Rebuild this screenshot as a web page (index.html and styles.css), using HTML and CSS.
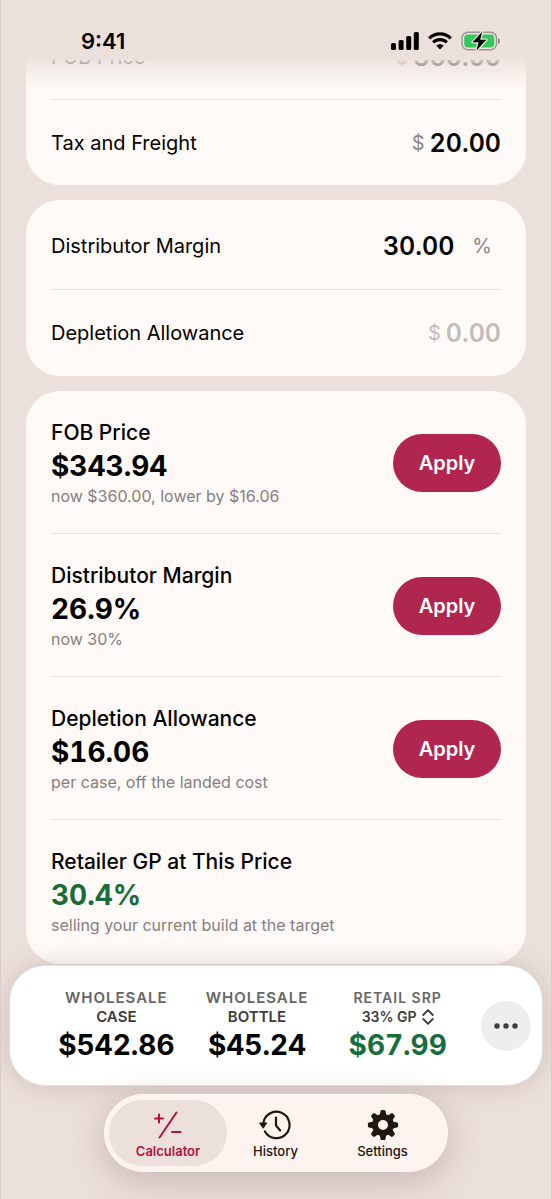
FILE: index.html
```html
<!DOCTYPE html>
<html lang="en">
<head>
<meta charset="utf-8">
<meta name="viewport" content="width=device-width, initial-scale=1">
<title>Calculator</title>
<link rel="stylesheet" href="styles.css">
</head>
<body>
<div class="screen">
  <main class="content">
    <section class="card card-first">
      <div class="field">
        <label class="field-label" for="fob">FOB Price</label>
        <span class="unit">$</span>
        <input class="amount" id="fob" type="text" inputmode="decimal" value="360.00">
      </div>
      <div class="field">
        <label class="field-label" for="tax">Tax and Freight</label>
        <span class="unit">$</span>
        <input class="amount" id="tax" type="text" inputmode="decimal" value="20.00">
      </div>
    </section>

    <section class="card">
      <div class="field">
        <label class="field-label" for="margin">Distributor Margin</label>
        <input class="amount" id="margin" type="text" inputmode="decimal" value="30.00">
        <span class="unit unit-after">%</span>
      </div>
      <div class="field">
        <label class="field-label" for="depletion">Depletion Allowance</label>
        <span class="unit unit-empty">$</span>
        <input class="amount" id="depletion" type="text" inputmode="decimal" placeholder="0.00">
      </div>
    </section>

    <section class="card card-results">
      <div class="result">
        <div class="result-text">
          <h2 class="result-title">FOB Price</h2>
          <p class="result-value">$343.94</p>
          <p class="result-note">now $360.00, lower by $16.06</p>
        </div>
        <button class="apply" type="button">Apply</button>
      </div>
      <div class="result">
        <div class="result-text">
          <h2 class="result-title">Distributor Margin</h2>
          <p class="result-value">26.9%</p>
          <p class="result-note">now 30%</p>
        </div>
        <button class="apply" type="button">Apply</button>
      </div>
      <div class="result">
        <div class="result-text">
          <h2 class="result-title">Depletion Allowance</h2>
          <p class="result-value">$16.06</p>
          <p class="result-note">per case, off the landed cost</p>
        </div>
        <button class="apply" type="button">Apply</button>
      </div>
      <div class="result">
        <div class="result-text">
          <h2 class="result-title">Retailer GP at This Price</h2>
          <p class="result-value good">30.4%</p>
          <p class="result-note">selling your current build at the target</p>
        </div>
      </div>
    </section>
  </main>

  <header class="status">
    <div class="status-bar">
      <time class="clock">9:41</time>
      <div class="indicators">
        <svg width="28" height="18" viewBox="0 0 28 18" aria-label="Signal">
          <rect x="0" y="11" width="5" height="7" rx="1.5"/>
          <rect x="7.6" y="8" width="5" height="10" rx="1.5"/>
          <rect x="15.2" y="4" width="5" height="14" rx="1.5"/>
          <rect x="22.8" y="0" width="5" height="18" rx="1.5"/>
        </svg>
        <svg width="24" height="18" viewBox="0 0 24 18" aria-label="Wi-Fi">
          <g fill="none" stroke="#000" stroke-width="3.2">
            <path d="M1.2 6.3C7.2 .4 16.8 .4 22.8 6.3"/>
            <path d="M5.2 10.4C9 6.8 15 6.8 18.8 10.4"/>
          </g>
          <path d="M12 17.4l-3.7-3.7c2.1-2 5.3-2 7.4 0z"/>
        </svg>
        <svg width="40" height="20" viewBox="0 0 40 20" aria-label="Battery charging">
          <rect x="1" y="1.3" width="34.500" height="17.400" rx="6" fill="none" stroke="#9b9391" stroke-width="1.4"/>
          <path d="M37 7v6c2.6-.8 2.6-5.200 0-6z" fill="#8b8482"/>
          <rect x="3.200" y="3.500" width="30" height="13" rx="4" fill="#34c759"/>
          <path d="M21.200.8L11.500 11.300h6l-2 8.200 9.900-10.700h-6.200z" fill="#000" stroke="#ece0dc" stroke-width="2.600" stroke-linejoin="round" paint-order="stroke"/>
        </svg>
      </div>
    </div>
    <div class="status-fade"></div>
  </header>

  <footer class="dock">
    <section class="summary">
      <div class="stat">
        <span class="stat-top">WHOLESALE</span>
        <span class="stat-sub">CASE</span>
        <strong class="stat-value">$542.86</strong>
      </div>
      <div class="stat">
        <span class="stat-top">WHOLESALE</span>
        <span class="stat-sub">BOTTLE</span>
        <strong class="stat-value">$45.24</strong>
      </div>
      <div class="stat stat-retail">
        <label class="stat-top" for="gp">RETAIL SRP</label>
        <span class="picker">
          <select class="stat-sub" id="gp"><option>33% GP</option></select>
          <svg width="12" height="16" viewBox="0 0 12 16" fill="none" stroke="#3c3c3c" stroke-width="1.8" stroke-linecap="round" stroke-linejoin="round" aria-hidden="true"><path d="M1.200 6L6 1.200 10.800 6M1.200 10L6 14.800 10.800 10"/></svg>
        </span>
        <strong class="stat-value good">$67.99</strong>
      </div>
      <button class="more" type="button" aria-label="More">
        <svg width="26" height="6" viewBox="0 0 26 6" aria-hidden="true"><circle cx="4" cy="3" r="2.700"/><circle cx="13" cy="3" r="2.700"/><circle cx="22" cy="3" r="2.700"/></svg>
      </button>
    </section>

    <nav class="tabs">
      <button class="tab tab-active" type="button">
        <svg width="32" height="32" viewBox="0 0 32 32" fill="none" stroke="currentColor" stroke-width="2" stroke-linecap="round" aria-hidden="true"><path d="M7 5.500v8M3 9.500h8M24.500 3.500L7.500 28.500M20 23h8.500"/></svg>
        Calculator
      </button>
      <button class="tab" type="button">
        <svg width="32" height="32" viewBox="0 0 32 32" fill="none" stroke="currentColor" stroke-width="2.200" stroke-linecap="round" stroke-linejoin="round" aria-hidden="true"><path d="M3.200 15A13.200 13.200 0 1 1 4.900 22.500"/><path d="M-.2 14h6.800l-3.400 4.800z" fill="currentColor" stroke-width="1.200"/><path d="M16 8.500v8l4.200 5"/></svg>
        History
      </button>
      <button class="tab" type="button">
        <svg width="32" height="32" viewBox="0 0 32 32" aria-hidden="true"><g fill="currentColor"><path fill-rule="evenodd" d="M16 5a11 11 0 1 1 0 22 11 11 0 0 1 0-22zm0 6a5 5 0 1 0 0 10 5 5 0 0 0 0-10z"/><path id="tooth" d="M13.600 1.800q.3-.9 1.200-.9h2.400q.9 0 1.200.9L19.500 7h-7z"/><use href="#tooth" transform="rotate(45 16 16)"/><use href="#tooth" transform="rotate(90 16 16)"/><use href="#tooth" transform="rotate(135 16 16)"/><use href="#tooth" transform="rotate(180 16 16)"/><use href="#tooth" transform="rotate(225 16 16)"/><use href="#tooth" transform="rotate(270 16 16)"/><use href="#tooth" transform="rotate(315 16 16)"/></g></svg>
        Settings
      </button>
    </nav>
  </footer>
</div>
</body>
</html>
```
FILE: styles.css
```css
* { box-sizing: border-box; }

body {
  margin: 0;
  background: #ece0dc;
  color: #000;
  font-family: Inter, "Liberation Sans", sans-serif;
}

h2, p { margin: 0; }
button, input, select { font: inherit; color: inherit; border: 0; padding: 0; margin: 0; }
button { cursor: pointer; }
svg { overflow: visible; }

.screen {
  position: relative;
  min-height: 100vh;
  overflow: hidden;
  border: solid #d9cecb;
  border-width: 0 1px;
}

.content {
  display: flex;
  flex-direction: column;
  gap: 15px;
  padding: 9px 25px 234px;
}

.card {
  padding: 3px 25px 0;
  border-radius: 34px;
  background: #fffaf7;
}
.card-first { padding-top: 4px; }
.card-results { padding: 0 25px 2px; }

.field {
  display: flex;
  align-items: center;
  height: 86px;
  font-size: 20px;
}
.field + .field, .result + .result { border-top: 1px solid #e8e2df; }
.card:not(.card-first) .field + .field { height: 87px; }
.card-first .field:first-child { padding-top: 2px; }
.field-label { flex: 1; }
.unit { color: #8a8684; margin-right: 5px; }
.unit-after { margin: 0 9px 0 18px; }
.unit-empty { color: #c2bdbb; }
.amount {
  field-sizing: content;
  background: none;
  outline: none;
  font-size: 25px;
  font-weight: 600;
  font-variant-numeric: tabular-nums;
  text-align: right;
}
.amount::placeholder { color: #c2bdbb; opacity: 1; }

.result {
  display: flex;
  align-items: center;
  justify-content: space-between;
  height: 143px;
  padding-top: 1px;
}
.result:first-child { height: 142px; }
.result-title { font-size: 21px; font-weight: 500; line-height: 30px; }
.result-value { font-size: 28px; font-weight: 700; line-height: 36px; font-variant-numeric: tabular-nums; }
.result-note { font-size: 16px; line-height: 24px; color: #85807e; }
.good { color: #176d3b; }

.apply {
  width: 108px;
  height: 58px;
  border-radius: 29px;
  background: #b0264e;
  color: #fff;
  font-size: 20px;
  font-weight: 600;
}

.status {
  position: absolute;
  inset: 0 0 auto;
}
.status-bar {
  display: flex;
  align-items: center;
  justify-content: space-between;
  height: 60px;
  padding: 22px 50px 0 80px;
  background: #ece0dc;
}
.clock { font-size: 22px; font-weight: 600; }
.indicators { display: flex; align-items: center; gap: 9px; }
.status-fade {
  height: 30px;
  margin: 0 25px;
  background: linear-gradient(rgba(236, 224, 220, .86), rgba(255, 250, 247, 0));
}

.dock {
  position: absolute;
  inset: auto 0 27px;
  display: flex;
  flex-direction: column;
  align-items: center;
  gap: 8px;
  padding: 0 8px;
}

.summary {
  display: flex;
  align-items: center;
  align-self: stretch;
  height: 121px;
  padding: 0 11px 0 36px;
  border: 1px solid #dfe0e0;
  border-radius: 36px;
  background: #fff;
  box-shadow: 0 0 26px rgba(90, 60, 50, .2);
}
.stat {
  flex: 1;
  display: flex;
  flex-direction: column;
  align-items: center;
}
.stat-top { font-size: 15px; font-weight: 600; line-height: 18px; letter-spacing: 1px; color: #656565; }
.stat-retail .stat-top { font-size: 14px; }
.stat-sub { font-size: 15px; font-weight: 600; line-height: 20px; color: #3c3c3c; }
.stat-value { font-size: 28px; font-weight: 700; line-height: 36px; font-variant-numeric: tabular-nums; }
.picker { display: flex; align-items: center; gap: 5px; }
.picker .stat-sub { appearance: none; background: none; font-size: 14px; }
.more {
  display: grid;
  place-items: center;
  width: 50px;
  height: 50px;
  margin-left: 13px;
  border-radius: 50%;
  background: #eee;
}
.more svg { fill: #3c3c3c; }

.tabs {
  display: flex;
  width: 344px;
  height: 78px;
  padding: 5px 4px;
  border: 1px solid #fffaf7;
  border-radius: 39px;
  background: #fff3ef;
  box-shadow: 0 8px 36px rgba(80, 50, 40, .25);
}
.tab {
  flex: 0 0 107px;
  display: flex;
  flex-direction: column;
  align-items: center;
  justify-content: center;
  gap: 1px;
  padding-top: 3px;
  border-radius: 33px;
  background: none;
  color: #201613;
  font-size: 13px;
  font-weight: 500;
  line-height: 18px;
}
.tab-active {
  flex-basis: 118px;
  margin-right: -5px;
  background: #ece0dc;
  color: #ad1442;
  font-weight: 600;
}
```
